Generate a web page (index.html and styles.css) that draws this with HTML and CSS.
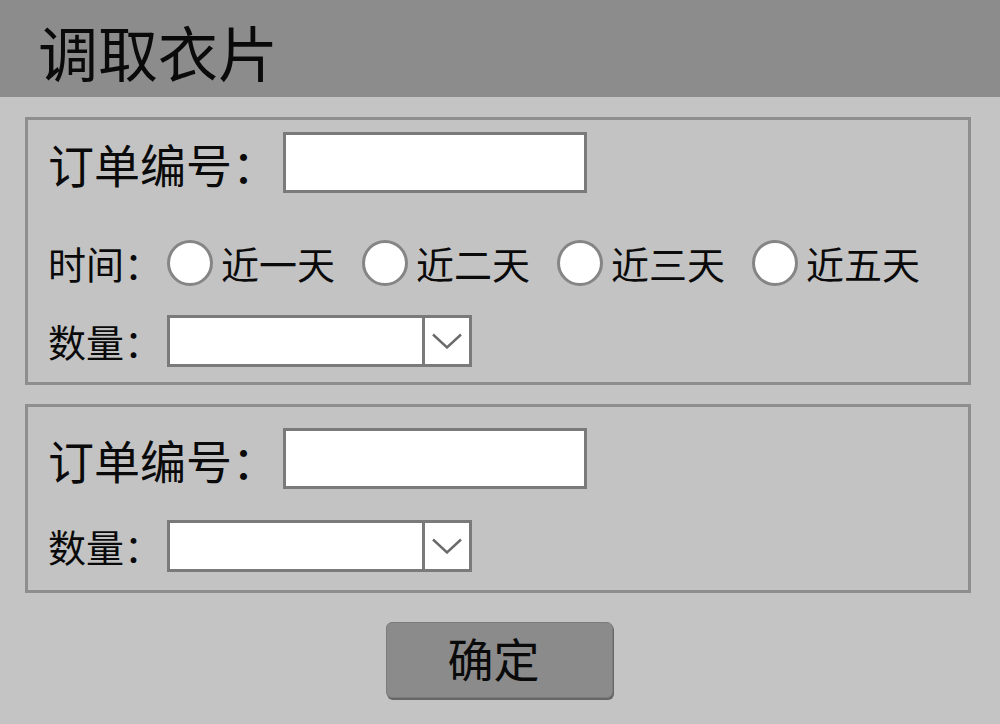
FILE: index.html
```html
<!DOCTYPE html>
<html lang="zh-CN">
<head>
<meta charset="utf-8">
<title>调取衣片</title>
<link rel="stylesheet" href="styles.css">
</head>
<body>
<header class="topbar"><h1 class="title">调取衣片</h1></header>
<main class="content">
  <section class="panel panel-first">
    <div class="row row-order">
      <span class="label-lg">订单编号：</span>
      <input class="text-input" type="text">
    </div>
    <div class="row row-time">
      <span class="label">时间：</span>
      <label class="option"><input class="radio" type="radio" name="t"><span class="option-text">近一天</span></label>
      <label class="option"><input class="radio" type="radio" name="t"><span class="option-text">近二天</span></label>
      <label class="option"><input class="radio" type="radio" name="t"><span class="option-text">近三天</span></label>
      <label class="option"><input class="radio" type="radio" name="t"><span class="option-text">近五天</span></label>
    </div>
    <div class="row row-qty">
      <span class="label">数量：</span>
      <div class="select">
        <div class="select-field"></div>
        <div class="select-arrow">
          <svg width="30" height="16" viewBox="0 0 30 16"><polyline points="1,1.5 15,14.5 29,1.5" fill="none" stroke="#6a6a6a" stroke-width="2.4"/></svg>
        </div>
      </div>
    </div>
  </section>
  <section class="panel panel-second">
    <div class="row row-order">
      <span class="label-lg">订单编号：</span>
      <input class="text-input" type="text">
    </div>
    <div class="row row-qty row-qty2">
      <span class="label">数量：</span>
      <div class="select">
        <div class="select-field"></div>
        <div class="select-arrow">
          <svg width="30" height="16" viewBox="0 0 30 16"><polyline points="1,1.5 15,14.5 29,1.5" fill="none" stroke="#6a6a6a" stroke-width="2.4"/></svg>
        </div>
      </div>
    </div>
  </section>
</main>
<footer class="actions"><button class="btn" type="button">确定</button></footer>
</body>
</html>
```
FILE: styles.css
```css
* { box-sizing: border-box; }
html, body { margin: 0; padding: 0; }
body {
  width: 1000px;
  height: 724px;
  overflow: hidden;
  background: #c4c4c4;
  color: #0a0a0a;
  font-family: "Noto Sans CJK SC", "Noto Sans", sans-serif;
}
.topbar {
  height: 97px;
  background: #8c8c8c;
  display: flex;
  align-items: center;
  padding-left: 38px;
  padding-top: 4px;
}
.title {
  margin: 0;
  font-size: 60px;
  font-weight: 400;
  line-height: 1;
}
.content {
  padding: 20px 29px 0 25px;
}
.panel {
  border: 3px solid #8e8e8e;
  background: #c3c3c3;
  padding-left: 20px;
}
.panel-first { padding-top: 12px; padding-bottom: 15px; }
.panel-second { margin-top: 19px; padding-top: 21px; padding-bottom: 18px; }
.row {
  display: flex;
  align-items: center;
}
.row-order { height: 61px; }
.row-time { height: 46px; margin-top: 47px; }
.row-qty { height: 52px; margin-top: 29px; }
.row-qty2 { margin-top: 31px; }
.label-lg {
  font-size: 46px;
  line-height: 1;
  width: 235px;
  white-space: nowrap;
}
.label {
  font-size: 38px;
  line-height: 1;
  width: 119px;
  white-space: nowrap;
}
.text-input {
  width: 304px;
  height: 61px;
  border: 3px solid #7a7a7a;
  background: #fff;
  margin: 0;
  padding: 0;
  outline: none;
}
.option {
  display: flex;
  align-items: center;
  margin-right: 27px;
}
.radio {
  appearance: none;
  -webkit-appearance: none;
  width: 46px;
  height: 46px;
  margin: 0;
  border-radius: 50%;
  border: 3px solid #858585;
  background: #fff;
}
.option-text {
  font-size: 38px;
  line-height: 1;
  margin-left: 8px;
}
.select {
  display: flex;
  width: 305px;
  height: 52px;
  border: 3px solid #7a7a7a;
  background: #fff;
}
.select-field { flex: 1; }
.select-arrow {
  width: 47px;
  border-left: 3px solid #7a7a7a;
  display: flex;
  align-items: center;
  justify-content: center;
}
.select-arrow svg { display: block; }
.actions {
  display: flex;
  justify-content: center;
  padding-top: 29px;
}
.btn {
  width: 227px;
  height: 76px;
  margin-left: -1px;
  background: #8b8b8b;
  border: 1px solid #7c7c7c;
  border-radius: 6px;
  box-shadow: 1px 2px 0 #666;
  font-family: "Noto Sans CJK SC", "Noto Sans", sans-serif;
  font-size: 46px;
  line-height: 1;
  color: #0a0a0a;
  padding: 0 12px 6px 0;
}
```
